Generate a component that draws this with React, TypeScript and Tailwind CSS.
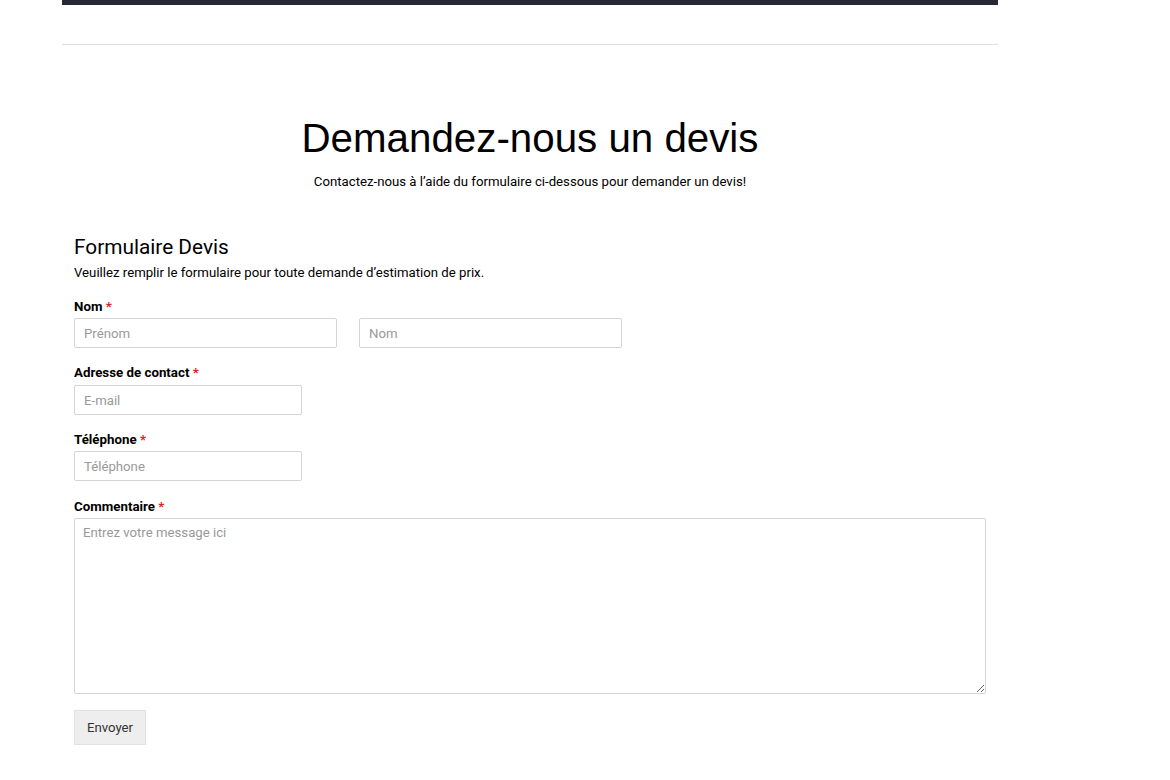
export default function App() {
  return (
    <div className="min-h-[780px] bg-white" style={{ fontFamily: 'Roboto, "Liberation Sans", sans-serif' }}>
      <div className="w-[936px] ml-[62px]">
        <div className="h-[5px] bg-[#262837]" />
        <div className="h-[39px]" />
        <div className="h-px bg-[#e0e0e0]" />

        <div className="pt-[70px] text-center">
          <h1 className="text-[40.3px] leading-[48px] text-black font-['Liberation_Sans',Arial,sans-serif]">
            Demandez-nous un devis
          </h1>
          <p className="mt-[10px] text-[13.2px] leading-[18px] text-black">
            Contactez-nous à l’aide du formulaire ci-dessous pour demander un devis!
          </p>
        </div>

        <form className="px-[12px] pt-[44px]" onSubmit={(e) => e.preventDefault()}>
          <h2 className="text-[20.8px] leading-[24px] text-black">Formulaire Devis</h2>
          <p className="mt-[5px] text-[13.2px] leading-[18px] text-black">
            Veuillez remplir le formulaire pour toute demande d’estimation de prix.
          </p>

          <Label text="Nom" className="mt-[17px]" />
          <div className="flex gap-[22px] mt-[3px]">
            <input
              placeholder="Prénom"
              className="w-[263px] h-[30px] border border-[#d4d4d4] rounded-[2px] px-[9px] text-[13.2px] placeholder:text-[#999] outline-none"
            />
            <input
              placeholder="Nom"
              className="w-[263px] h-[30px] border border-[#d4d4d4] rounded-[2px] px-[9px] text-[13.2px] placeholder:text-[#999] outline-none"
            />
          </div>

          <Label text="Adresse de contact" className="mt-[17px]" />
          <input
            placeholder="E-mail"
            className="mt-[4px] block w-[228px] h-[30px] border border-[#d4d4d4] rounded-[2px] px-[9px] text-[13.2px] placeholder:text-[#999] outline-none"
          />

          <Label text="Téléphone" className="mt-[17px]" />
          <input
            placeholder="Téléphone"
            className="mt-[3px] block w-[228px] h-[30px] border border-[#d4d4d4] rounded-[2px] px-[9px] text-[13.2px] placeholder:text-[#999] outline-none"
          />

          <Label text="Commentaire" className="mt-[18px]" />
          <textarea
            placeholder="Entrez votre message ici"
            className="mt-[3px] block w-[912px] h-[176px] border border-[#d4d4d4] rounded-[2px] px-[8px] py-[5px] text-[13.2px] leading-[18px] placeholder:text-[#999] outline-none"
          />

          <button
            type="submit"
            className="mt-[16px] w-[72px] h-[35px] bg-[#eeeeee] border border-[#e2e2e2] text-[13.2px] text-[#333]"
          >
            Envoyer
          </button>
        </form>
      </div>
    </div>
  );
}

function Label({ text, className }: { text: string; className?: string }) {
  return (
    <div className={`text-[13.3px] leading-[16px] font-bold text-black ${className ?? ''}`}>
      {text} <span className="text-[#e02020]">*</span>
    </div>
  );
}
